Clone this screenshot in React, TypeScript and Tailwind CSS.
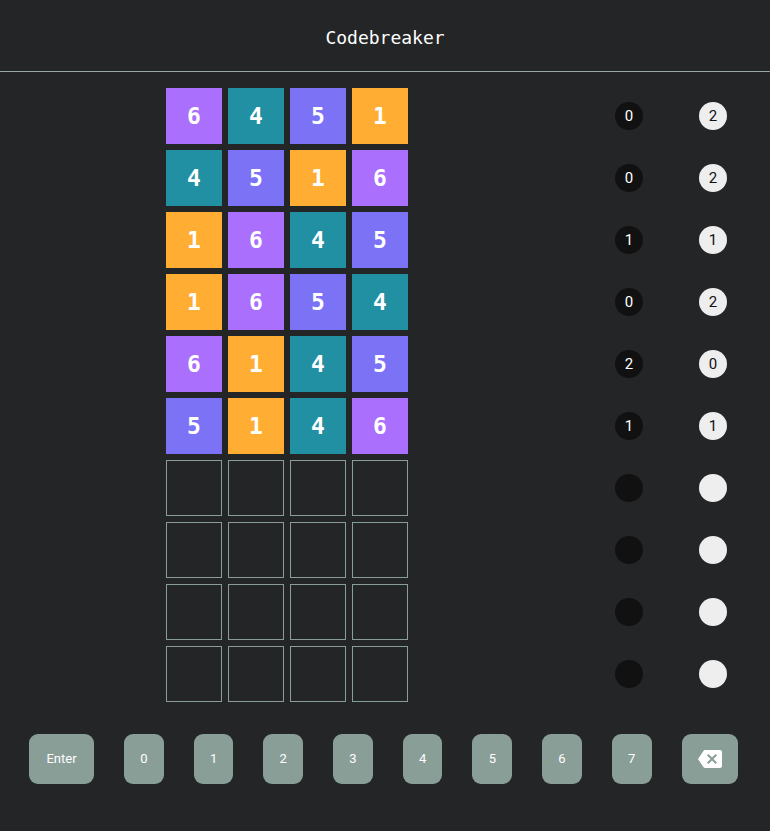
import React from 'react';

const colors: Record<number, string> = {
  1: 'bg-[#ffad33]',
  4: 'bg-[#2190a3]',
  5: 'bg-[#7b72f5]',
  6: 'bg-[#aa6ffd]',
};

const guesses = [
  { code: [6, 4, 5, 1], black: 0, white: 2 },
  { code: [4, 5, 1, 6], black: 0, white: 2 },
  { code: [1, 6, 4, 5], black: 1, white: 1 },
  { code: [1, 6, 5, 4], black: 0, white: 2 },
  { code: [6, 1, 4, 5], black: 2, white: 0 },
  { code: [5, 1, 4, 6], black: 1, white: 1 },
];

const TOTAL_ROWS = 10;

const Row = ({ code, black, white }: { code?: number[]; black?: number; white?: number }) => (
  <div className="flex items-center pl-[166px]">
    <div className="flex gap-[6px]">
      {[0, 1, 2, 3].map(i =>
        code ? (
          <div
            key={i}
            className={`w-[56px] h-[56px] flex items-center justify-center text-white text-[23px] font-bold ${colors[code[i]]}`}
            style={{ fontFamily: '"DejaVu Sans Mono", monospace' }}
          >
            {code[i]}
          </div>
        ) : (
          <div key={i} className="w-[56px] h-[56px] border border-[#8a9e98]" />
        )
      )}
    </div>
    <div className="ml-[207px] w-[28px] h-[28px] rounded-full bg-[#111111] text-white text-[15px] flex items-center justify-center">
      {black}
    </div>
    <div className="ml-[56px] w-[28px] h-[28px] rounded-full bg-[#eeeeee] text-[#111] text-[15px] flex items-center justify-center">
      {white}
    </div>
  </div>
);

const Key = ({ children, w }: { children: React.ReactNode; w: string }) => (
  <button className={`${w} shrink-0 h-[50px] rounded-[9px] bg-[#8a9e98] text-white text-[13px] flex items-center justify-center`}>
    {children}
  </button>
);

const App = () => {
  const rows = [...guesses, ...Array(TOTAL_ROWS - guesses.length).fill(null)];
  return (
    <div className="min-h-screen bg-[#232527]" style={{ fontFamily: 'Roboto, "Noto Sans", sans-serif' }}>
      <header className="h-[72px] border-b border-[#9aa8a3] flex items-center justify-center">
        <h1 className="text-white text-[18px] pt-[3px]" style={{ fontFamily: '"DejaVu Sans Mono", monospace' }}>
          Codebreaker
        </h1>
      </header>

      <div className="flex flex-col gap-[6px] pt-[16px]">
        {rows.map((g, i) => (g ? <Row key={i} {...g} /> : <Row key={i} />))}
      </div>

      <div className="flex gap-[30px] pl-[29px] mt-[32px]">
        <Key w="w-[65px]">Enter</Key>
        {[0, 1, 2, 3, 4, 5, 6, 7].map(n => (
          <Key key={n} w="w-[39.7px]">
            {n}
          </Key>
        ))}
        <Key w="w-[56px]">
          <svg width="24" height="24" viewBox="0 0 24 24" fill="white">
            <path d="M22 3H7c-.69 0-1.23.35-1.59.88L0 12l5.41 8.11c.36.53.9.89 1.59.89h15c1.1 0 2-.9 2-2V5c0-1.1-.9-2-2-2zm-3 12.59L17.59 17 14 13.41 10.41 17 9 15.59 12.59 12 9 8.41 10.41 7 14 10.59 17.59 7 19 8.41 15.41 12 19 15.59z" />
          </svg>
        </Key>
      </div>
    </div>
  );
};

export default App;
